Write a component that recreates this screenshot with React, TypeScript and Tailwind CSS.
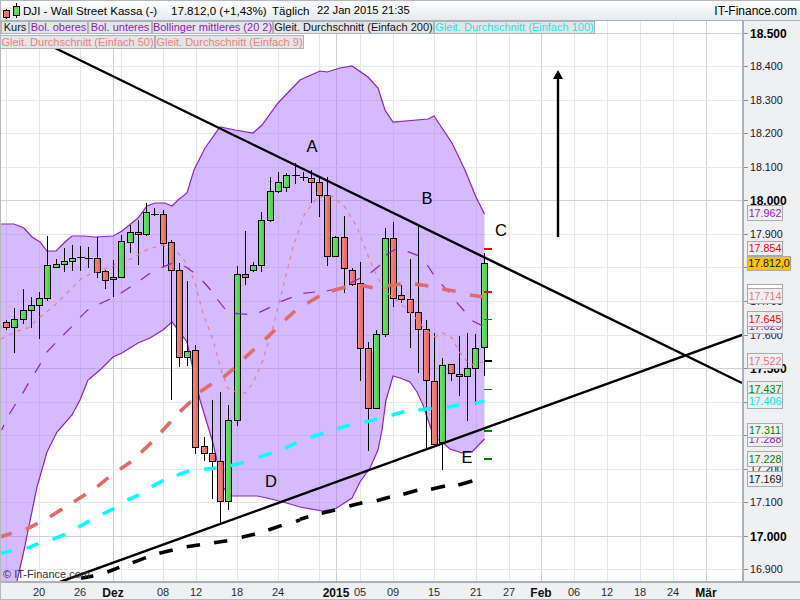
import React from "react";

type C = [number, number, number, number, number, "g" | "r" | "d"];
// center x, wick top, wick bottom, body top, body bottom, colour
const candles: C[] = [
  [6.5, 320, 330, 322, 327, "r"], [14.5, 308, 353, 319, 327, "g"], [23.5, 289, 324, 310, 319, "g"], [31.5, 297, 328, 305, 310, "g"],
  [39.5, 292, 339, 298, 305, "g"], [47.5, 236, 301, 265, 298, "g"], [56.5, 259, 268, 264, 267, "g"], [64.5, 248, 272, 261, 264, "g"],
  [72.5, 245, 271, 258, 261, "g"], [80.5, 246, 271, 257, 258, "d"], [88.5, 247, 268, 258, 258, "d"], [97.5, 237, 278, 258, 272, "r"],
  [105.5, 270, 289, 271, 280, "r"], [113.5, 260, 297, 277, 279, "g"], [121.5, 235, 278, 241, 277, "g"], [130.5, 225, 253, 232, 242, "g"],
  [138.5, 220, 265, 232, 234, "r"], [146.5, 203, 236, 212, 234, "g"], [154.5, 208, 216, 214, 214, "d"], [163.5, 210, 267, 214, 243, "r"],
  [171.5, 240, 400, 242, 270, "r"], [179.5, 263, 367, 270, 357, "r"], [187.5, 281, 366, 351, 357, "g"], [195.5, 345, 454, 350, 447, "r"],
  [204.5, 437, 461, 446, 453, "r"], [212.5, 400, 499, 453, 461, "r"], [220.5, 392, 523, 461, 501, "r"], [228.5, 405, 510, 420, 501, "g"],
  [237.5, 266, 426, 274, 420, "g"], [245.5, 231, 285, 274, 277, "r"], [253.5, 262, 272, 265, 270, "g"], [261.5, 212, 272, 220, 265, "g"],
  [270.5, 177, 222, 191, 220, "g"], [278.5, 172, 193, 182, 191, "g"], [286.5, 173, 192, 175, 187, "g"], [295.5, 163, 184, 175, 175, "d"],
  [303.5, 172, 181, 177, 177, "d"], [311.5, 170, 203, 178, 182, "r"], [319.5, 178, 217, 182, 195, "r"], [327.5, 177, 266, 195, 256, "r"],
  [335.5, 236, 256, 237, 256, "g"], [344.5, 216, 293, 237, 268, "r"], [352.5, 268, 286, 270, 284, "r"], [360.5, 262, 381, 283, 348, "r"],
  [368.5, 342, 451, 348, 408, "r"], [376.5, 330, 408, 334, 408, "g"], [385.5, 228, 337, 238, 334, "g"], [393.5, 222, 307, 238, 298, "r"],
  [401.5, 285, 303, 295, 299, "r"], [410.5, 259, 348, 299, 312, "r"], [418.5, 226, 373, 312, 329, "r"], [426.5, 320, 448, 329, 380, "r"],
  [434.5, 333, 445, 381, 444, "r"], [442.5, 358, 470, 365, 442, "g"], [451.5, 364, 381, 364, 373, "r"], [459.5, 336, 396, 374, 376, "r"],
  [467.5, 333, 421, 368, 376, "g"], [475.5, 334, 405, 348, 368, "g"], [484.5, 253, 376, 263, 347, "g"],
];

const upper = "0,224 14,224 24,228 32,237 40,242 47,251 56,251 65,242 72,236 84,236 95,237 113,236 122,231 138,218 147,206 155,203 165,203 172,206 178,200 187,193 194,170 205,148 220,127 235,130 253,133 262,125 278,103 300,80 320,71 327,72 340,68 352,66 368,77 378,88 385,110 393,122 428,119 434,116 452,143 465,170 476,197 484.5,214";
const lower = "484.5,439 472,452 462,453 450,449 442,442 434,437 428,420 423,405 417,392 410,382 400,378 393,376 389,390 386,400 382,430 378,450 370,468 360,482 352,498 335,509 322,511 300,507 283,502 267,498 257,496 230,496 223,487 213,443 200,400 187,342 172,322 163,330 150,338 138,343 122,353 113,357 100,370 88,380 80,400 72,415 57,432 47,452 37,487 23,555 17,581";

// segments in zoom coordinates of the reference crops, converted to page pixels
const z4 = (a: number, b: number, c: number, d: number) => [a / 3, 200 + b / 3, c / 3, 200 + d / 3];
const z5 = (a: number, b: number, c: number, d: number) => [250 + a / 3, 190 + b / 3, 250 + c / 3, 190 + d / 3];
const z8 = (a: number, b: number, c: number, d: number) => [a / 3, 400 + b / 3, c / 3, 400 + d / 3];
const z9 = (a: number, b: number, c: number, d: number) => [300 + a / 3, 400 + b / 3, 300 + c / 3, 400 + d / 3];

const midBand = [
  z8(5, 90, 12, 75), z8(28, 42, 47, 12), z4(68, 580, 85, 550), z4(105, 518, 122, 490), z4(140, 457, 165, 430), z4(190, 405, 215, 380),
  z4(240, 352, 265, 328), z4(298, 312, 330, 297), z4(362, 280, 392, 260), z4(422, 240, 450, 220), z4(485, 203, 515, 190), z4(553, 198, 580, 217),
  z4(608, 243, 632, 270), z4(652, 298, 675, 327), z4(705, 340, 742, 343), z5(28, 367, 60, 352), z5(92, 335, 125, 322), z5(160, 310, 195, 306),
  z5(230, 303, 285, 290), z5(300, 280, 330, 265), z5(362, 248, 390, 226), z5(408, 195, 436, 178), z5(473, 185, 505, 197), z5(532, 225, 550, 253),
  z5(575, 283, 597, 307), z5(620, 337, 643, 363), z5(667, 392, 697, 407),
];
const ma50 = [
  z8(3, 410, 35, 400), z8(78, 388, 113, 370), z8(150, 350, 187, 327), z8(222, 305, 257, 283), z8(292, 260, 325, 233), z8(360, 208, 393, 185),
  z8(423, 157, 455, 127), z8(483, 97, 512, 65), z8(540, 35, 572, 5), z4(600, 575, 635, 552), z4(670, 532, 702, 505), z4(733, 475, 763, 447),
  z5(45, 448, 75, 420), z5(105, 390, 135, 363), z5(172, 340, 208, 318), z5(245, 303, 287, 291), z5(332, 286, 368, 293), z5(412, 287, 452, 282),
  z5(495, 282, 535, 288), z5(577, 297, 617, 304), z5(660, 315, 700, 321),
];
const ma100 = [
  z8(3, 460, 35, 452), z8(80, 445, 115, 431), z8(158, 418, 195, 403), z8(235, 382, 268, 362), z8(308, 342, 343, 325), z8(382, 300, 417, 285),
  z8(455, 260, 490, 241), z8(530, 226, 567, 212), z8(612, 208, 650, 204), z8(692, 197, 732, 187), z8(775, 172, 815, 160), z8(855, 145, 890, 128),
  z9(32, 112, 70, 100), z9(112, 86, 150, 75), z9(193, 67, 232, 58), z9(275, 45, 313, 35), z9(355, 30, 395, 25), z9(440, 22, 478, 15), z9(525, 10, 553, 3),
];
const ma200 = [
  z8(243, 535, 280, 528), z8(322, 516, 358, 502), z8(398, 488, 438, 473), z8(478, 460, 518, 450), z8(560, 440, 600, 434), z8(642, 428, 682, 422),
  z8(725, 412, 765, 402), z8(805, 390, 845, 376), z8(888, 364, 900, 360), z9(0, 358, 25, 350), z9(65, 340, 105, 330), z9(148, 318, 187, 308),
  z9(230, 302, 270, 291), z9(310, 283, 352, 271), z9(393, 268, 435, 258), z9(475, 255, 517, 243),
];
const ma9 = "1,339 15,332 28,328 40,317 55,305 70,290 82,278 93,273 113,266 133,258 148,249 163,245 177,252 188,265 195,283 203,313 213,340 222,373 228,388 238,393 245,393 253,383 263,360 273,327 283,287 293,247 305,213 318,197 332,196 345,207 357,227 367,253 377,277 387,293 400,303 413,315 423,327 435,337 443,333 452,338 460,353 470,365 483,362";

const vLines: [number, boolean][] = [
  [6, false], [39, false], [80, false], [113, true], [121, false], [163, false], [196, false], [237, false], [278, false], [319, false], [336, true],
  [360, false], [393, false], [434, false], [476, false], [509, false], [541, true], [574, false], [607, false], [640, false], [673, false], [706, true],
];
const hLines: [number, boolean][] = [
  [33, true], [66, false], [100, false], [133, false], [167, false], [200, true], [234, false], [267, false], [301, false], [335, false], [368, true],
  [402, false], [435, false], [469, false], [502, false], [536, true], [569, false],
];

const ticks: [number, string, string][] = [
  [248, "#ff0000", "2"], [291, "#ff0000", "2"], [319, "#ff0000", "1"], [360, "#000000", "2"], [389, "#008000", "1"], [430, "#008000", "2"], [458, "#008000", "2"],
];

const priceLabels: [number, string, boolean][] = [
  [33, "18.500", true], [66, "18.400", false], [100, "18.300", false], [133, "18.200", false], [167, "18.100", false], [200, "18.000", true], [234, "17.900", false],
  [267, "17.800", false], [301, "17.700", false], [335, "17.600", false], [368, "17.500", true], [402, "17.400", false], [435, "17.300", false], [469, "17.200", false],
  [502, "17.100", false], [536, "17.000", true], [569, "16.900", false],
];

const tags: { t: string; top: number; h: number; w: number; cls: string }[] = [
  { t: "17.962", top: 205, h: 16, w: 36, cls: "text-[#8a18c8] bg-[#f0f0f2]" },
  { t: "17.854", top: 241, h: 15, w: 36, cls: "text-[#ff0000] bg-[#f0f0f2]" },
  { t: "17.812,0", top: 256, h: 15, w: 44, cls: "text-[#111111] bg-[#fbc400]" },
  { t: "17.726", top: 284, h: 16, w: 36, cls: "text-[#8a18c8] bg-[#ffffff]" },
  { t: "17.714", top: 288, h: 16, w: 36, cls: "text-[#e8737a] bg-[#f0f0f2]" },
  { t: "17.625", top: 318, h: 16, w: 36, cls: "text-[#8a18c8] bg-[#f0f0f2]" },
  { t: "17.645", top: 311, h: 16, w: 36, cls: "text-[#ff0000] bg-[#f0f0f2]" },
  { t: "17.522", top: 353, h: 16, w: 36, cls: "text-[#e8737a] bg-[#f0f0f2]" },
  { t: "17.437", top: 381, h: 16, w: 36, cls: "text-[#008000] bg-[#f0f0f2]" },
  { t: "17.406", top: 393, h: 16, w: 36, cls: "text-[#00e8e8] bg-[#f0f0f2]" },
  { t: "17.288", top: 431, h: 16, w: 36, cls: "text-[#8a18c8] bg-[#f0f0f2]" },
  { t: "17.311", top: 423, h: 15, w: 36, cls: "text-[#008000] bg-[#f0f0f2]" },
  { t: "17.228", top: 451, h: 16, w: 36, cls: "text-[#008000] bg-[#f0f0f2]" },
  { t: "17.169", top: 471, h: 16, w: 36, cls: "text-[#111111] bg-[#f0f0f2]" },
];

const dateLabels: [number, string, boolean][] = [
  [39, "20", false], [80, "26", false], [113, "Dez", true], [163, "08", false], [196, "12", false], [237, "18", false], [278, "24", false], [336, "2015", true],
  [360, "05", false], [393, "09", false], [434, "15", false], [476, "21", false], [509, "27", false], [541, "Feb", true], [574, "06", false], [607, "12", false],
  [640, "18", false], [673, "24", false], [706, "Mär", true],
];

const letters: [number, number, string][] = [[312, 152, "A"], [427, 204, "B"], [501, 236, "C"], [271, 487, "D"], [467, 463, "E"]];

const legend1: [string, string, string][] = [
  ["Kurs", "w-[28px] text-[#111111]", "Kurs"],
  ["Bol. oberes", "w-[59px] text-[#8a18c8]", "a"],
  ["Bol. unteres", "w-[64px] text-[#8a18c8]", "b"],
  ["Bollinger mittleres (20 2)", "w-[121px] text-[#8a18c8]", "c"],
  ["Gleit. Durchschnitt (Einfach 200)", "w-[161px] text-[#111111]", "d"],
  ["Gleit. Durchschnitt (Einfach 100)", "w-[161px] text-[#19e6e6]", "e"],
];
const legend2: [string, string, string][] = [
  ["Gleit. Durchschnitt (Einfach 50)", "w-[155px] text-[#e8807c]", "f"],
  ["Gleit. Durchschnitt (Einfach 9)", "w-[149px] text-[#e8807c]", "g"],
];

function Segs({ data, color, width }: { data: number[][]; color: string; width: number }) {
  return (
    <g stroke={color} strokeWidth={width}>
      {data.map((s, i) => (
        <line key={i} x1={s[0]} y1={s[1]} x2={s[2]} y2={s[3]} />
      ))}
    </g>
  );
}

function Chart() {
  return (
    <svg className="absolute left-0 top-0 block" width={741} height={560} viewBox="1 21 741 560">
      <defs>
        <linearGradient id="gr" x1="0" x2="1" y1="0" y2="0">
          <stop offset="0" stopColor="#6fe56f" />
          <stop offset="1" stopColor="#44cc48" />
        </linearGradient>
        <linearGradient id="rd" x1="0" x2="1" y1="0" y2="0">
          <stop offset="0" stopColor="#f38d87" />
          <stop offset="1" stopColor="#e2625e" />
        </linearGradient>
      </defs>
      <g shapeRendering="crispEdges">
        {vLines.map(([x, d]) => (
          <line key={x} x1={x + 0.5} x2={x + 0.5} y1={20} y2={581} stroke={d ? "#cfcfcf" : "#e6e6e6"} />
        ))}
        {hLines.map(([y, d]) => (
          <line key={y} x1={0} x2={742} y1={y + 0.5} y2={y + 0.5} stroke={d ? "#d2d2d2" : "#e8e8e8"} />
        ))}
      </g>
      <polygon points={`${upper} ${lower} 0,581`} fill="#a86cff" fillOpacity={0.47} />
      <polyline points={upper} fill="none" stroke="#8a22c6" strokeWidth={1.2} />
      <polyline points={lower} fill="none" stroke="#8a22c6" strokeWidth={1.2} />
      <g shapeRendering="crispEdges">
        {candles.map(([x, wt, wb, bt, bb, c], i) => (
          <g key={i}>
            <line x1={x} x2={x} y1={wt} y2={wb} stroke="#000" />
            {c === "d" ? (
              <line x1={x - 4} x2={x + 4} y1={bt + 0.5} y2={bt + 0.5} stroke="#000" />
            ) : (
              <rect x={x - 3} y={bt + 0.5} width={6} height={Math.max(bb - bt, 1)} fill={c === "g" ? "url(#gr)" : "url(#rd)"} stroke="#000" />
            )}
          </g>
        ))}
      </g>
      <polyline points={ma9} fill="none" stroke="#e8807a" strokeWidth={1.2} strokeDasharray="4 5" />
      <Segs data={midBand} color="#8a22c6" width={1.2} />
      <Segs data={ma50} color="#e06c68" width={3.6} />
      <Segs data={ma100} color="#00ffff" width={3.6} />
      <Segs data={ma200} color="#000000" width={3.6} />
      <g shapeRendering="crispEdges">
        {ticks.map(([y, c, h]) => (
          <rect key={y} x={484} y={y} width={8} height={Number(h)} fill={c} />
        ))}
      </g>
      <line x1={55} y1={48} x2={742} y2={383} stroke="#000" strokeWidth={2.4} />
      <line x1={60} y1={582} x2={742} y2={335} stroke="#000" strokeWidth={2.4} />
      <line x1={558} y1={237} x2={558} y2={76} stroke="#000" strokeWidth={2.4} />
      <polygon points="558,70 563,79 553,79" fill="#000" />
      {letters.map(([x, y, t]) => (
        <text key={t} x={x} y={y} textAnchor="middle" fontSize={16.5} fill="#000" fontFamily="'Liberation Sans', Arial, sans-serif">
          {t}
        </text>
      ))}
    </svg>
  );
}

function Legend({ items, height }: { items: [string, string, string][]; height: string }) {
  return (
    <div className={`flex gap-0 ${height}`}>
      {items.map(([t, cls, k]) => (
        <div key={k} className={`flex shrink-0 items-center justify-center border border-[#aeb2b6] bg-[#e3e6e9] text-[11px] leading-none whitespace-nowrap ${cls}`}>
          {t}
        </div>
      ))}
    </div>
  );
}

export default function App() {
  return (
    <div className="flex h-[600px] w-[800px] flex-col overflow-hidden border-t border-l border-b border-[#b4b8bc] bg-white font-['Liberation_Sans',Arial,sans-serif] text-[#111111]">
      <header className="flex h-[20px] shrink-0 items-center bg-gradient-to-b from-[#ffffff] to-[#e4ebf0] border-b border-[#aab0b6] leading-none text-[#000000]">
        <svg width="20" height="19" viewBox="0 0 20 19" className="ml-[2px] shrink-0">
          <line x1="3.5" x2="3.5" y1="8" y2="18" stroke="#000" />
          <rect x="0.5" y="9.5" width="6" height="7" fill="#ef6f6a" stroke="#000" />
          <line x1="13.5" x2="13.5" y1="2" y2="17" stroke="#000" />
          <rect x="10.5" y="5.5" width="6" height="9" fill="#5ddb5d" stroke="#000" />
        </svg>
        <span className="w-[148px] shrink-0 text-[11.6px] whitespace-nowrap">DJI - Wall Street Kassa (-)</span>
        <span className="w-[101px] shrink-0 text-[11.6px] whitespace-nowrap">17.812,0 (+1,43%)</span>
        <span className="w-[45px] shrink-0 text-[11.6px] whitespace-nowrap">Täglich</span>
        <span className="text-[11.2px] whitespace-nowrap">22 Jan 2015 21:35</span>
        <span className="mr-[3px] ml-auto text-[12px] whitespace-nowrap">IT-Finance.com</span>
      </header>
      <div className="flex min-h-0 flex-1">
        <main className="relative w-[741px] shrink-0 overflow-hidden">
          <Chart />
          <div className="absolute left-0 top-0 flex flex-col gap-[1px]">
            <Legend items={legend1} height="h-[13px]" />
            <div className="-ml-[1px]">
              <Legend items={legend2} height="h-[14px]" />
            </div>
          </div>
          <span className="absolute bottom-[1px] left-[2px] text-[11px] leading-none text-[#333333]">© IT-Finance.com</span>
        </main>
        <aside className="relative flex-1 border-l-2 border-[#aab0b6] bg-[#eff0f2]">
          {priceLabels.map(([y, t, b]) => (
            <React.Fragment key={t}>
              <div className="absolute left-0 h-px w-[4px] bg-[#8a8f94]" style={{ top: y - 21 }} />
              <span
                className={`absolute left-[6px] leading-none whitespace-nowrap ${b ? "text-[12px] font-bold text-[#000000]" : "text-[10.7px] text-[#1a1030]"}`}
                style={{ top: y - 26 }}
              >
                {t}
              </span>
            </React.Fragment>
          ))}
          {tags.map((g) => (
            <div
              key={g.t}
              className={`absolute left-[3px] flex items-center justify-center border border-[#aaaaaa] text-[10.7px] leading-none ${g.cls}`}
              style={{ top: g.top - 21, height: g.h, width: g.w }}
            >
              {g.t}
            </div>
          ))}
        </aside>
      </div>
      <footer className="relative h-[18px] shrink-0 border-t-2 border-[#aab0b6] bg-[#eff0f2]">
        {dateLabels.map(([x, t, b]) => (
          <span
            key={t + x}
            className={`absolute top-[4px] -translate-x-1/2 leading-none whitespace-nowrap ${b ? "text-[12px] font-bold text-[#111111]" : "text-[11px] text-[#1f2a36]"}`}
            style={{ left: x - 1 }}
          >
            {t}
          </span>
        ))}
      </footer>
    </div>
  );
}
